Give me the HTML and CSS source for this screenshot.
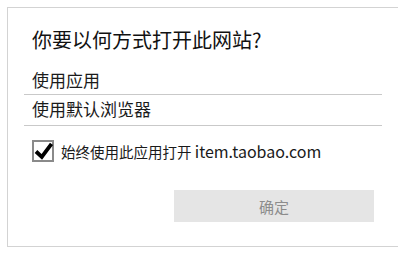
FILE: index.html
```html
<!DOCTYPE html>
<html lang="zh-CN">
<head>
<meta charset="utf-8">
<link rel="stylesheet" href="styles.css">
</head>
<body>
<div class="dialog">
  <div class="title">你要以何方式打开此网站?</div>
  <div class="options">
    <div class="option first">使用应用</div>
    <div class="option second">使用默认浏览器</div>
  </div>
  <label class="remember">
    <span class="box">
      <svg viewBox="0 0 22 22" width="22" height="22"><path d="M4 11.5 L9.8 17 L19.5 3.8" fill="none" stroke="#000" stroke-width="3.8" stroke-linejoin="miter" stroke-linecap="butt"/></svg>
    </span>
    <span class="remember-text">始终使用此应用打开 <span class="site">item.taobao.com</span></span>
  </label>
  <div class="actions">
    <button class="ok" type="button">确定</button>
  </div>
</div>
</body>
</html>
```
FILE: styles.css
```css
html, body {
  margin: 0;
  padding: 0;
  background: #fff;
}
body {
  font-family: "Noto Sans CJK SC", "Noto Sans", sans-serif;
  color: #1a1a1a;
}
.dialog {
  box-sizing: border-box;
  margin: 7px 0 0 7px;
  width: 391px;
  height: 240px;
  border: 1px solid #d3d3d3;
  border-right: none;
  display: flex;
  flex-direction: column;
}
.title {
  font-size: 20px;
  line-height: 28px;
  padding: 18px 0 0 24px;
  color: #111;
}
.options {
  margin: 16px 16px 0 16px;
}
.option {
  font-size: 17px;
  line-height: 20px;
  padding-left: 8px;
  border-bottom: 1px solid #c9c9c9;
}
.option.first {
  padding-bottom: 4px;
}
.option.second {
  padding-top: 4px;
  padding-bottom: 6px;
}
.remember {
  display: flex;
  align-items: center;
  margin: 14px 0 0 24px;
  gap: 7px;
}
.box {
  box-sizing: border-box;
  width: 22px;
  height: 22px;
  border: 2px solid #8a8a8a;
  position: relative;
  flex: none;
}
.box svg {
  position: absolute;
  left: -2px;
  top: -2px;
}
.remember-text {
  font-size: 14.5px;
  line-height: 20px;
}
.site {
  font-size: 16px;
}
.actions {
  display: flex;
  justify-content: flex-end;
  margin: 28px 24px 0 0;
}
.ok {
  width: 200px;
  height: 32px;
  border: none;
  background: #e5e5e5;
  color: #8c8c8c;
  font-family: "Noto Sans CJK SC", sans-serif;
  font-size: 15px;
  padding: 0;
}
```
